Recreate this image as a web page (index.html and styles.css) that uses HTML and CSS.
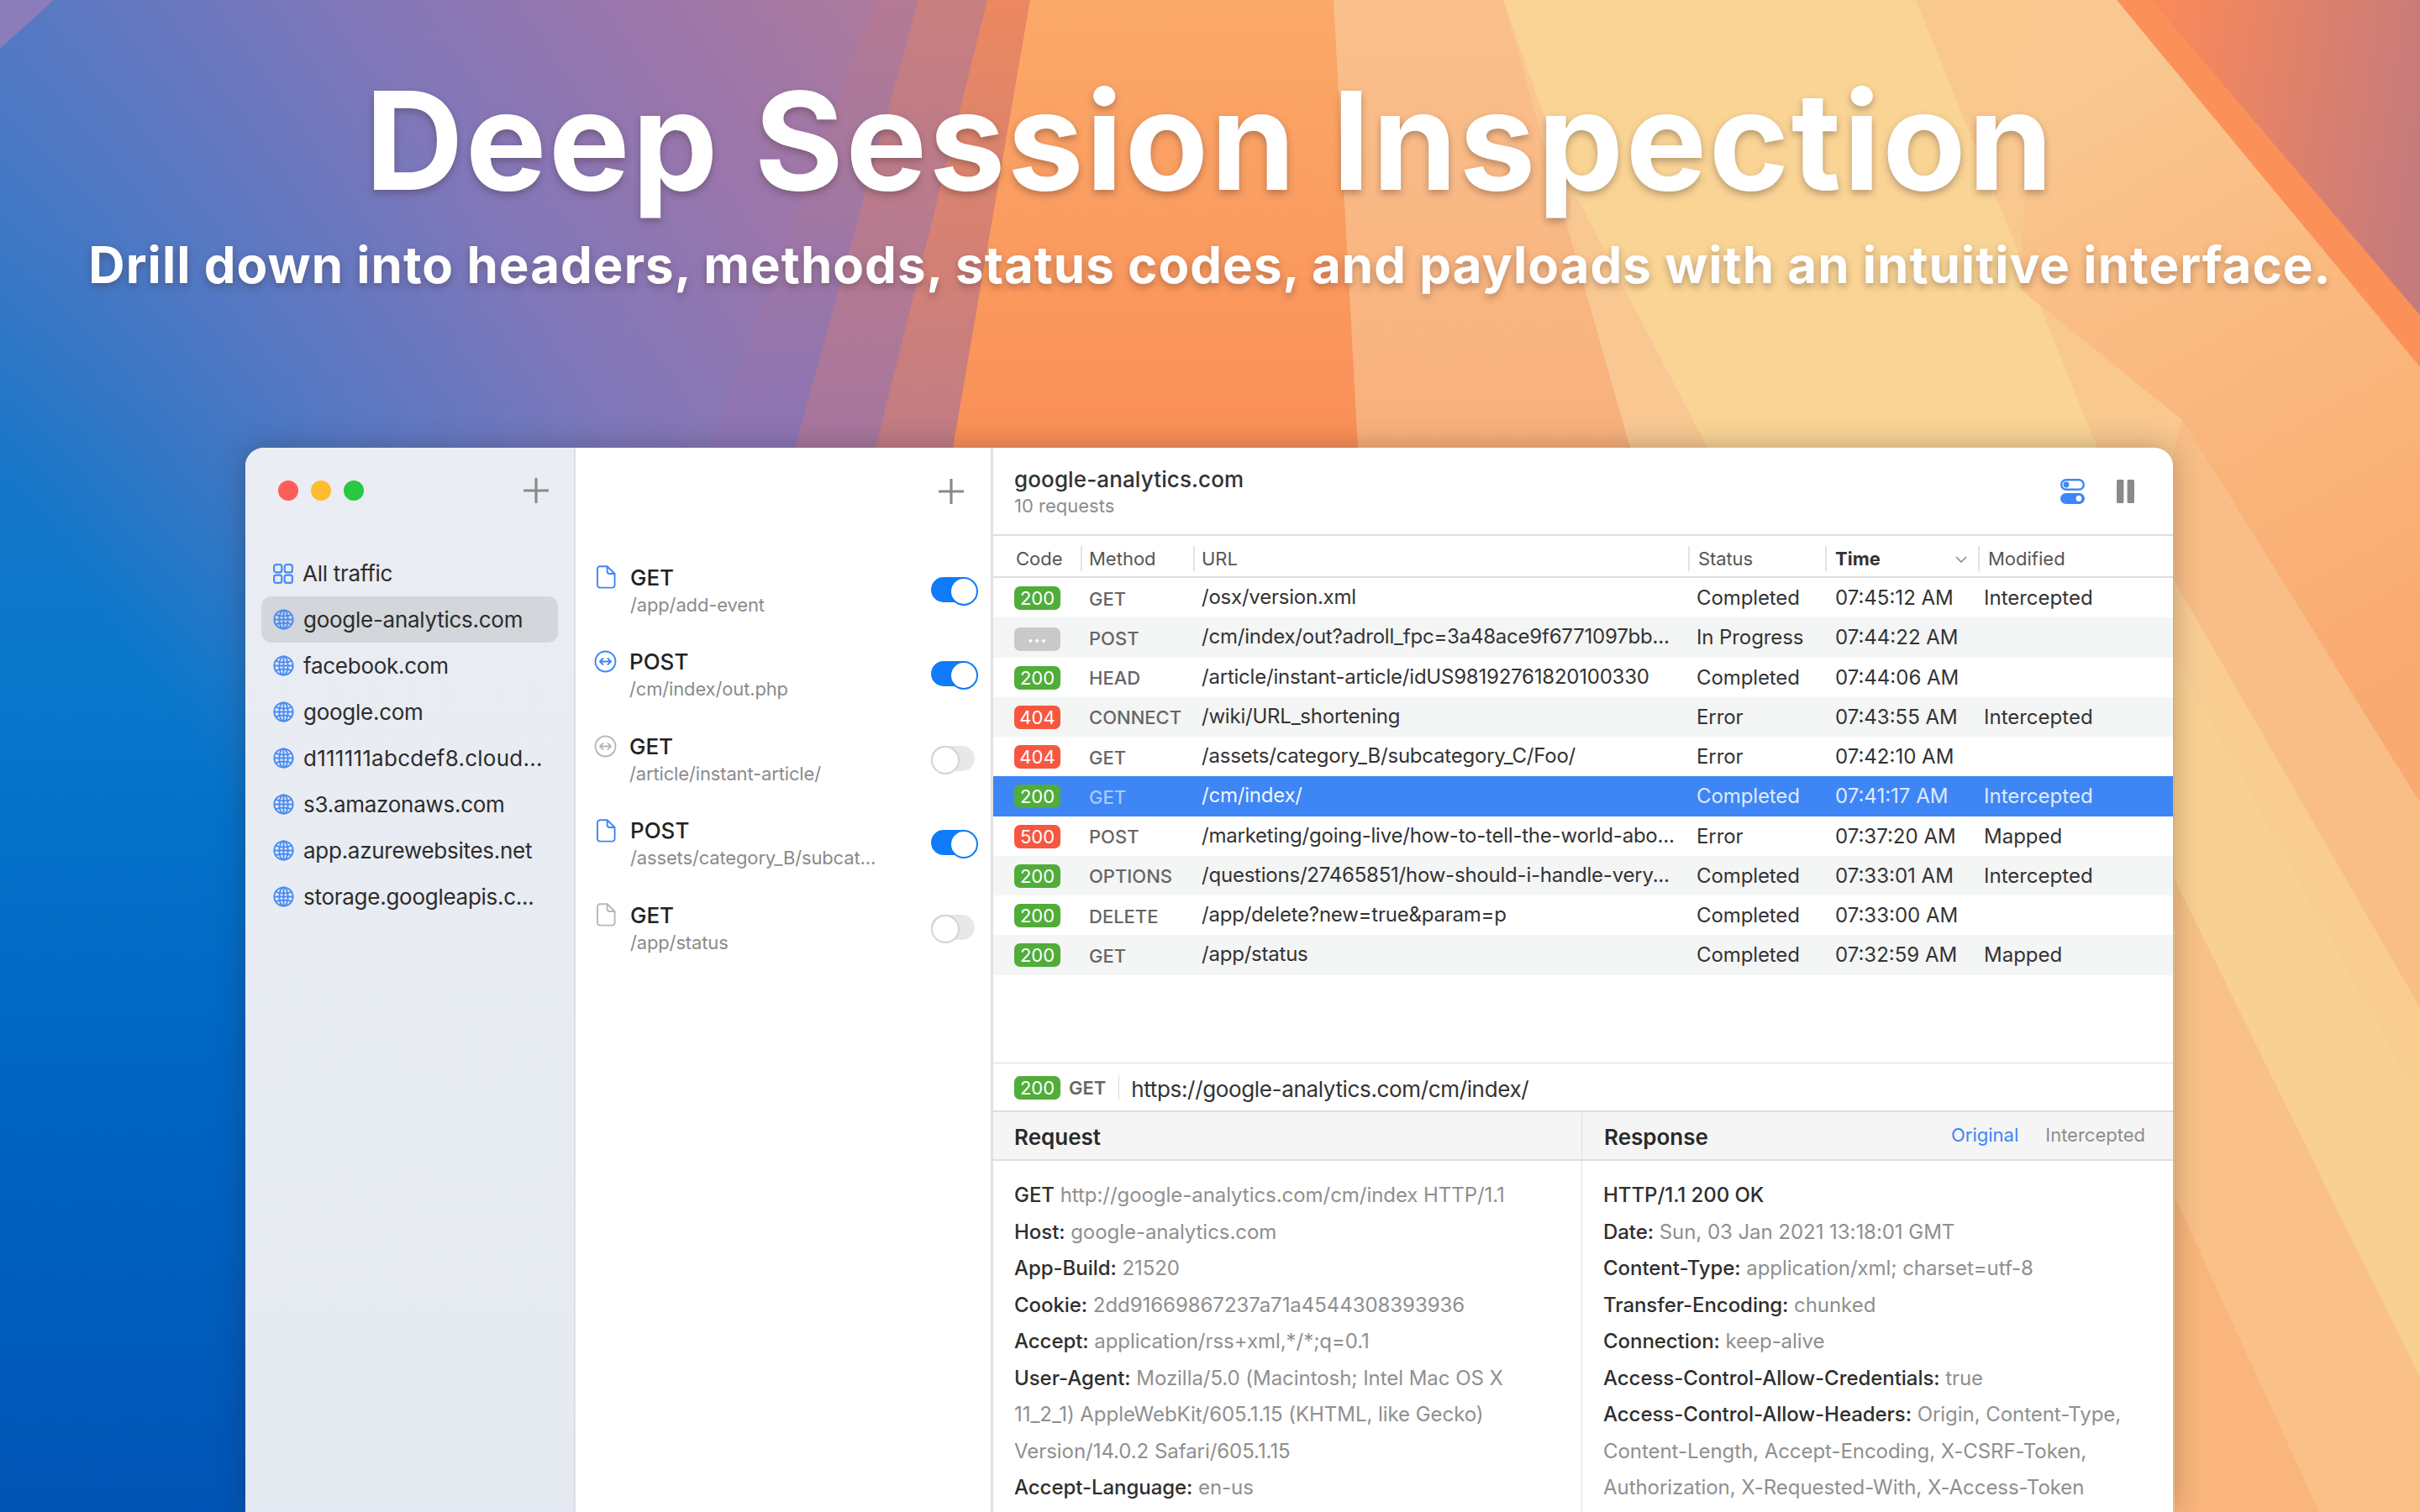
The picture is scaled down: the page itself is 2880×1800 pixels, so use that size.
FILE: index.html
```html
<!DOCTYPE html>
<html lang="en">
<head>
<meta charset="utf-8">
<title>Deep Session Inspection</title>
<link rel="stylesheet" href="styles.css">
</head>
<body>
<svg width="0" height="0" class="defs">
  <defs>
    <symbol id="i-globe" viewBox="0 0 26 26"><g fill="none" stroke="currentColor" stroke-width="2"><circle cx="13" cy="13" r="11.6"/><ellipse cx="13" cy="13" rx="5.4" ry="11.6"/><path d="M13 1.4v23.2M1.4 13h23.2M3.2 7.2c5.5 2.2 14 2.2 19.6 0M3.2 18.8c5.5-2.2 14-2.2 19.6 0"/></g></symbol>
    <symbol id="i-grid" viewBox="0 0 24 24"><g fill="none" stroke="currentColor" stroke-width="2.2"><rect x="1.1" y="1.1" width="9.2" height="9.2" rx="2.4"/><rect x="13.7" y="1.1" width="9.2" height="9.2" rx="2.4"/><rect x="1.1" y="13.7" width="9.2" height="9.2" rx="2.4"/><rect x="13.7" y="13.7" width="9.2" height="9.2" rx="2.4"/></g></symbol>
    <symbol id="i-doc" viewBox="0 0 24 28"><path d="M5 1.2h8.6L22.6 10v13.6a3 3 0 0 1-3 3H5a3 3 0 0 1-3-3V4.2a3 3 0 0 1 3-3ZM13.6 1.2V7a3 3 0 0 0 3 3h6" fill="none" stroke="currentColor" stroke-width="1.9" stroke-linejoin="round"/></symbol>
    <symbol id="i-swap" viewBox="0 0 28 28"><g fill="none" stroke="currentColor" stroke-linecap="round" stroke-linejoin="round"><circle cx="14" cy="14" r="12.4" stroke-width="2"/><path d="M7.4 14h13.2M11 10.2 7.2 14l3.8 3.8M17 10.2l3.8 3.8-3.8 3.8" stroke-width="1.9"/></g></symbol>
    <symbol id="i-plus" viewBox="0 0 30 30"><path d="M15 1v28M1 15h28" stroke="currentColor" stroke-width="3.2" stroke-linecap="round"/></symbol>
  </defs>
</svg>
<main class="stage">
  <svg class="wallpaper" viewBox="0 0 2880 1800" preserveAspectRatio="none">
    <defs>
      <linearGradient id="g-blue" x1="0" y1="0" x2="0" y2="1800" gradientUnits="userSpaceOnUse">
        <stop offset="0" stop-color="#3b7bc8"/><stop offset=".28" stop-color="#1a76c8"/><stop offset=".45" stop-color="#0878cc"/><stop offset=".67" stop-color="#0068c5"/><stop offset="1" stop-color="#0054b5"/>
      </linearGradient>
      <linearGradient id="g-violet" x1="100" y1="700" x2="1050" y2="60" gradientUnits="userSpaceOnUse">
        <stop offset="0" stop-color="#5a78c0" stop-opacity="0"/><stop offset=".3" stop-color="#5f78c2" stop-opacity=".85"/><stop offset=".55" stop-color="#7f77ba"/><stop offset=".8" stop-color="#9a76ac"/><stop offset="1" stop-color="#ab7a9f"/>
      </linearGradient>
      <linearGradient id="g-p1" x1="0" y1="0" x2="0" y2="533" gradientUnits="userSpaceOnUse"><stop offset="0" stop-color="#b57a93"/><stop offset="1" stop-color="#8b74b5"/></linearGradient>
      <linearGradient id="g-p2" x1="0" y1="0" x2="0" y2="533" gradientUnits="userSpaceOnUse"><stop offset="0" stop-color="#c97f7e"/><stop offset="1" stop-color="#a6769f"/></linearGradient>
      <linearGradient id="g-p3" x1="0" y1="0" x2="0" y2="533" gradientUnits="userSpaceOnUse"><stop offset="0" stop-color="#ec8860"/><stop offset="1" stop-color="#c07c85"/></linearGradient>
      <linearGradient id="g-p5" x1="0" y1="0" x2="0" y2="533" gradientUnits="userSpaceOnUse"><stop offset="0" stop-color="#fba969"/><stop offset="1" stop-color="#fa8f58"/></linearGradient>
      <linearGradient id="g-p6" x1="0" y1="0" x2="0" y2="533" gradientUnits="userSpaceOnUse"><stop offset="0" stop-color="#fac08c"/><stop offset="1" stop-color="#f8b07b"/></linearGradient>
      <linearGradient id="g-r0" x1="2450" y1="100" x2="2850" y2="800" gradientUnits="userSpaceOnUse"><stop offset="0" stop-color="#f9c891"/><stop offset=".45" stop-color="#fab97f"/><stop offset="1" stop-color="#f9aa70"/></linearGradient>
      <linearGradient id="g-dusk" x1="2560" y1="150" x2="2880" y2="200" gradientUnits="userSpaceOnUse"><stop offset="0" stop-color="#f9895a"/><stop offset="1" stop-color="#c57a7c"/></linearGradient>
    </defs>
    <rect width="2880" height="1800" fill="url(#g-blue)"/>
    <rect width="2880" height="1800" fill="url(#g-violet)"/>
    <polygon points="0,0 64,0 0,58" fill="#8a7dba"/>
    <polygon points="1042,0 2880,0 2880,1800 700,1800 845,533" fill="url(#g-p1)"/>
    <polygon points="1093,0 2880,0 2880,1800 800,1800 946,533" fill="url(#g-p2)"/>
    <polygon points="1175,0 2880,0 2880,1800 900,1800 1042,533" fill="url(#g-p3)"/>
    <polygon points="1226,0 2880,0 2880,1800 1000,1800 1134,533" fill="url(#g-p5)"/>
    <polygon points="1587,0 2880,0 2880,1800 1700,1800 1616,533" fill="url(#g-p6)"/>
    <polygon points="1789,0 2880,0 2880,1800 2000,1800 1940,533" fill="#f9c892"/>
    <polygon points="1789,0 2280,0 2880,1400 2880,1800 2200,1800 2032,533 1862,207" fill="#f9d495"/>
    <polygon points="2280,0 2880,0 2880,1800 2700,1800 2496,533" fill="#f9c88f"/>
    <polygon points="2519,0 2880,437 2880,956 2597,500 2404,344 2420,0" fill="url(#g-r0)"/>
    <polygon points="2597,500 2880,956 2880,1200 2588,692 2586,540" fill="#f9be87"/>
    <polygon points="2588,692 2880,1200 2880,1312 2588,780" fill="#f9cd92"/>
    <polygon points="2588,780 2880,1312 2880,1640 2588,1047" fill="#f9d093"/>
    <polygon points="2588,1047 2880,1640 2880,1800 2760,1800 2588,1424" fill="#f9c088"/>
    <polygon points="2588,1424 2760,1800 2588,1800" fill="#fab57c"/>
    <polygon points="2519,0 2880,0 2880,437" fill="#fb9159"/>
    <polygon points="2560,0 2880,0 2880,375" fill="url(#g-dusk)"/>
  </svg>

  <header class="hero">
    <h1 class="hero-title">Deep Session Inspection</h1>
    <p class="hero-sub">Drill down into headers, methods, status codes, and payloads with an intuitive interface.</p>
  </header>

  <section class="window">
    <aside class="sidebar">
      <div class="side-head">
        <span class="light red"></span><span class="light amber"></span><span class="light green"></span>
        <svg class="plus plus-side"><use href="#i-plus"/></svg>
      </div>
      <nav class="side-list">
        <a class="side-item"><svg class="side-icon grid-icon"><use href="#i-grid"/></svg>All traffic</a>
        <a class="side-item is-active"><svg class="side-icon"><use href="#i-globe"/></svg>google-analytics.com</a>
        <a class="side-item"><svg class="side-icon"><use href="#i-globe"/></svg>facebook.com</a>
        <a class="side-item"><svg class="side-icon"><use href="#i-globe"/></svg>google.com</a>
        <a class="side-item wide-digits"><svg class="side-icon"><use href="#i-globe"/></svg>d111111abcdef8.cloud...</a>
        <a class="side-item"><svg class="side-icon"><use href="#i-globe"/></svg>s3.amazonaws.com</a>
        <a class="side-item"><svg class="side-icon"><use href="#i-globe"/></svg>app.azurewebsites.net</a>
        <a class="side-item"><svg class="side-icon"><use href="#i-globe"/></svg>storage.googleapis.c...</a>
      </nav>
    </aside>

    <section class="rules">
      <div class="rules-head"><svg class="plus"><use href="#i-plus"/></svg></div>
      <div class="rule">
        <svg class="rule-icon doc on"><use href="#i-doc"/></svg>
        <div class="rule-text"><div class="rule-method">GET</div><div class="rule-path">/app/add-event</div></div>
        <span class="toggle on"></span>
      </div>
      <div class="rule">
        <svg class="rule-icon swap on"><use href="#i-swap"/></svg>
        <div class="rule-text"><div class="rule-method">POST</div><div class="rule-path">/cm/index/out.php</div></div>
        <span class="toggle on"></span>
      </div>
      <div class="rule">
        <svg class="rule-icon swap off"><use href="#i-swap"/></svg>
        <div class="rule-text"><div class="rule-method">GET</div><div class="rule-path">/article/instant-article/</div></div>
        <span class="toggle"></span>
      </div>
      <div class="rule">
        <svg class="rule-icon doc on"><use href="#i-doc"/></svg>
        <div class="rule-text"><div class="rule-method">POST</div><div class="rule-path">/assets/category_B/subcat...</div></div>
        <span class="toggle on"></span>
      </div>
      <div class="rule">
        <svg class="rule-icon doc off"><use href="#i-doc"/></svg>
        <div class="rule-text"><div class="rule-method">GET</div><div class="rule-path">/app/status</div></div>
        <span class="toggle"></span>
      </div>
    </section>

    <section class="detail">
      <div class="detail-head">
        <div class="detail-title">
          <div class="host">google-analytics.com</div>
          <div class="count">10 requests</div>
        </div>
        <div class="detail-tools">
          <svg class="tool-switch" viewBox="0 0 29 30"><rect x="1.2" y="1.2" width="26.6" height="11.6" rx="5.8" fill="none" stroke="#3f86f5" stroke-width="2.4"/><circle cx="7" cy="7" r="3.4" fill="#3f86f5"/><rect y="17" width="29" height="13" rx="6.5" fill="#3f86f5"/><circle cx="22" cy="23.5" r="3.4" fill="#fff"/></svg>
          <svg class="tool-pause" viewBox="0 0 21 28"><rect width="8.4" height="28" rx="1.6" fill="#8a8a8a"/><rect x="12.6" width="8.4" height="28" rx="1.6" fill="#8a8a8a"/></svg>
        </div>
      </div>

      <div class="tr thead">
        <div class="th c-code">Code</div>
        <div class="th c-div">Method</div>
        <div class="th c-div">URL</div>
        <div class="th c-div c-status">Status</div>
        <div class="th c-div c-time sorted">Time<svg class="chev" viewBox="0 0 14 9"><path d="M1 1l6 6 6-6" fill="none" stroke="#8d8d8d" stroke-width="1.6"/></svg></div>
        <div class="th c-div c-mod">Modified</div>
      </div>

      <div class="rows">
        <div class="tr row"><div class="c-code"><span class="badge ok">200</span></div><div class="method">GET</div><div class="url">/osx/version.xml</div><div class="c-status">Completed</div><div class="c-time">07:45:12 AM</div><div class="c-val">Intercepted</div></div>
        <div class="tr row alt"><div class="c-code"><span class="badge wait">•••</span></div><div class="method">POST</div><div class="url">/cm/index/out?adroll_fpc=3a48ace9f6771097bb...</div><div class="c-status">In Progress</div><div class="c-time">07:44:22 AM</div><div class="c-val"></div></div>
        <div class="tr row"><div class="c-code"><span class="badge ok">200</span></div><div class="method">HEAD</div><div class="url">/article/instant-article/idUS98192761820100330</div><div class="c-status">Completed</div><div class="c-time">07:44:06 AM</div><div class="c-val"></div></div>
        <div class="tr row alt"><div class="c-code"><span class="badge err">404</span></div><div class="method">CONNECT</div><div class="url">/wiki/URL_shortening</div><div class="c-status">Error</div><div class="c-time">07:43:55 AM</div><div class="c-val">Intercepted</div></div>
        <div class="tr row"><div class="c-code"><span class="badge err">404</span></div><div class="method">GET</div><div class="url">/assets/category_B/subcategory_C/Foo/</div><div class="c-status">Error</div><div class="c-time">07:42:10 AM</div><div class="c-val"></div></div>
        <div class="tr row selected"><div class="c-code"><span class="badge ok">200</span></div><div class="method">GET</div><div class="url">/cm/index/</div><div class="c-status">Completed</div><div class="c-time">07:41:17 AM</div><div class="c-val">Intercepted</div></div>
        <div class="tr row"><div class="c-code"><span class="badge err">500</span></div><div class="method">POST</div><div class="url">/marketing/going-live/how-to-tell-the-world-abo...</div><div class="c-status">Error</div><div class="c-time">07:37:20 AM</div><div class="c-val">Mapped</div></div>
        <div class="tr row alt"><div class="c-code"><span class="badge ok">200</span></div><div class="method">OPTIONS</div><div class="url">/questions/27465851/how-should-i-handle-very...</div><div class="c-status">Completed</div><div class="c-time">07:33:01 AM</div><div class="c-val">Intercepted</div></div>
        <div class="tr row"><div class="c-code"><span class="badge ok">200</span></div><div class="method">DELETE</div><div class="url">/app/delete?new=true&amp;param=p</div><div class="c-status">Completed</div><div class="c-time">07:33:00 AM</div><div class="c-val"></div></div>
        <div class="tr row alt"><div class="c-code"><span class="badge ok">200</span></div><div class="method">GET</div><div class="url">/app/status</div><div class="c-status">Completed</div><div class="c-time">07:32:59 AM</div><div class="c-val">Mapped</div></div>
      </div>

      <div class="inspector">
        <div class="urlbar">
          <span class="badge ok">200</span><span class="urlbar-method">GET</span><span class="urlbar-url">https://google-analytics.com/cm/index/</span>
        </div>
        <div class="panes">
          <div class="pane pane-req">
            <div class="pane-head"><h2 class="pane-title">Request</h2></div>
            <div class="pane-body">
              <div><b>GET</b> http://google-analytics.com/cm/index HTTP/1.1</div>
              <div><b>Host:</b> google-analytics.com</div>
              <div><b>App-Build:</b> 21520</div>
              <div><b>Cookie:</b> 2dd91669867237a71a4544308393936</div>
              <div><b>Accept:</b> application/rss+xml,*/*;q=0.1</div>
              <div><b>User-Agent:</b> Mozilla/5.0 (Macintosh; Intel Mac OS X<br>11_2_1) AppleWebKit/605.1.15 (KHTML, like Gecko)<br>Version/14.0.2 Safari/605.1.15</div>
              <div><b>Accept-Language:</b> en-us</div>
            </div>
          </div>
          <div class="pane">
            <div class="pane-head"><h2 class="pane-title">Response</h2><div class="pane-tabs"><span class="tab-on">Original</span><span>Intercepted</span></div></div>
            <div class="pane-body">
              <div><b>HTTP/1.1 200 OK</b></div>
              <div><b>Date:</b> Sun, 03 Jan 2021 13:18:01 GMT</div>
              <div><b>Content-Type:</b> application/xml; charset=utf-8</div>
              <div><b>Transfer-Encoding:</b> chunked</div>
              <div><b>Connection:</b> keep-alive</div>
              <div><b>Access-Control-Allow-Credentials:</b> true</div>
              <div><b>Access-Control-Allow-Headers:</b> Origin, Content-Type,<br>Content-Length, Accept-Encoding, X-CSRF-Token,<br>Authorization, X-Requested-With, X-Access-Token</div>
            </div>
          </div>
        </div>
      </div>
    </section>
  </section>
</main>
</body>
</html>
```
FILE: styles.css
```css
* { box-sizing: border-box; }
html, body { margin: 0; padding: 0; }
body { width: 2880px; height: 1800px; overflow: hidden; font-family: Inter, "Liberation Sans", sans-serif; color: #2b2b2b; }
.defs { position: absolute; }
.stage { position: relative; width: 2880px; height: 1800px; overflow: hidden; display: flex; flex-direction: column; }
.wallpaper { position: absolute; inset: 0; width: 2880px; height: 1800px; }

.hero { position: relative; height: 533px; padding-top: 70px; text-align: center; color: #fff; }
.hero-title { margin: 0; font-size: 162px; line-height: 194px; font-weight: 700; letter-spacing: 2.6px; text-shadow: 0 4px 8px rgba(60, 40, 40, .35); }
.hero-sub { margin: 15px 0 0; font-size: 60px; line-height: 72px; font-weight: 700; letter-spacing: 1.03px; text-shadow: 0 4px 8px rgba(60, 40, 40, .35); }

.window { position: relative; flex: 1; min-height: 0; margin-left: 292px; width: 2294px; display: flex; background: #fff; border-radius: 22px 22px 0 0; box-shadow: 0 0 34px rgba(40, 30, 30, .3); overflow: hidden; }

.sidebar { flex: 0 0 393px; min-width: 0; background: linear-gradient(180deg, #eaedf3, #e5eaf2); border-right: 2px solid #dcdfe6; }
.side-head { height: 102px; margin-bottom: 20px; padding: 0 30px 0 39px; display: flex; align-items: center; gap: 15px; }
.light { width: 24px; height: 24px; border-radius: 50%; }
.light.red { background: #ff5f57; }
.light.amber { background: #febc2e; }
.light.green { background: #28c840; }
.plus { width: 30px; height: 30px; color: #8a8a8a; display: block; }
.plus-side { margin-left: auto; }
.side-list { padding: 0 19px; display: flex; flex-direction: column; }
.side-item { height: 55px; padding-left: 14px; display: flex; align-items: center; gap: 11px; font-size: 26px; letter-spacing: -.27px; color: #2c2c2c; border-radius: 12px; white-space: nowrap; }
.side-item.is-active { background: #d3d6db; }
.side-item.wide-digits { letter-spacing: .25px; }
.side-icon { width: 25px; height: 25px; color: #4a8cf2; flex: none; }
.grid-icon { width: 24px; height: 24px; }

.rules { flex: 0 0 497px; min-width: 0; border-right: 3px solid #e1e1e3; }
.rules-head { height: 120px; padding: 37px 32px 0 0; display: flex; justify-content: flex-end; align-items: flex-start; }
.rule { height: 100.5px; display: flex; align-items: center; padding: 0 19px 0 23px; }
.rule-icon { flex: none; width: 26px; height: 28px; margin-right: 16px; margin-top: -32px; }
.rule-icon.swap { width: 27px; height: 27px; margin-right: 15px; margin-left: -1px; }
.rule-icon.on { color: #3f86f5; }
.rule-icon.off { color: #b8b8b8; }
.rule-text { flex: 1; min-width: 0; padding-top: 1px; }
.rule-method { font-size: 26px; line-height: 33px; font-weight: 500; color: #222; }
.rule-path { font-size: 22px; line-height: 33px; letter-spacing: -.15px; color: #8b8b8b; white-space: nowrap; }
.toggle { position: relative; flex: none; width: 52px; height: 30px; margin-bottom: 3px; border-radius: 15px; background: linear-gradient(90deg, #e4e4e4, #e9e9e9); }
.toggle::after { content: ""; position: absolute; left: 0; top: 0; width: 30px; height: 30px; border-radius: 50%; background: #fff; border: 2px solid #d4d4d4; }
.toggle.on { background: #0f7bf8; }
.toggle.on::after { left: 22px; border-color: #0f7bf8; }

.detail { flex: 1; min-width: 0; display: flex; flex-direction: column; }
.detail-head { flex: 0 0 105px; display: flex; align-items: center; justify-content: space-between; padding: 0 46px 0 25px; border-bottom: 2px solid #dedede; }
.host { font-size: 26px; line-height: 34px; font-weight: 500; letter-spacing: .12px; color: #333; }
.count { font-size: 22px; line-height: 28px; color: #8d8d8d; }
.detail-tools { display: flex; align-items: center; gap: 38px; }
.tool-switch { width: 29px; height: 30px; display: block; }
.tool-pause { width: 21px; height: 28px; display: block; }

.tr { display: grid; grid-template-columns: 104px 134px 589px 163px 182px 1fr; align-items: center; }
.thead { flex: 0 0 50px; padding-top: 6px; border-bottom: 2px solid #dedede; }
.th { font-size: 22px; color: #565656; height: 30px; line-height: 30px; white-space: nowrap; }
.th.c-code { padding-left: 27px; }
.c-div { border-left: 2px solid #e4e4e4; padding-left: 8px; }
.th.c-status { padding-left: 10px; }
.th.c-time { padding: 0 13px 0 10px; display: flex; align-items: center; justify-content: space-between; }
.th.c-mod { padding-left: 10px; }
.sorted { font-weight: 700; color: #333; }
.chev { width: 14px; height: 9px; margin-top: 3px; }

.rows { flex: 1; min-height: 0; }
.row { height: 47.25px; font-size: 24px; color: #333; white-space: nowrap; }
.row.alt { background: #f4f5f5; }
.row > .c-code { padding-left: 25px; }
.method { padding-left: 10px; font-size: 22px; font-weight: 500; color: #666; padding-top: 2px; }
.url { padding-left: 10px; padding-bottom: 2px; letter-spacing: -.22px; color: #333; }
.c-status { padding-left: 10px; letter-spacing: -.1px; }
.c-time { padding-left: 12px; }
.c-val { padding-left: 7px; }
.row.selected { background: #3e86f6; color: #dfeafd; }
.row.selected .method { color: #a8c9fa; }
.row.selected .url { color: #eef4fe; }

.badge { display: inline-flex; align-items: center; justify-content: center; width: 55px; height: 28px; border-radius: 7px; font-size: 22px; color: #fff; }
.badge.ok { background: #50ad3a; }
.badge.err { background: #f7573f; }
.badge.wait { background: #c9c9c9; font-size: 12px; letter-spacing: 1px; }

.inspector { flex: 0 0 535px; border-top: 1px solid #dcdcdc; display: flex; flex-direction: column; }
.urlbar { flex: 0 0 58px; display: flex; align-items: center; padding: 2px 0 0 25px; border-bottom: 2px solid #dedede; }
.urlbar-method { margin-left: 10px; padding-right: 15px; line-height: 30px; font-size: 22px; font-weight: 600; color: #666; border-right: 1px solid #dcdcdc; }
.urlbar-url { margin-left: 14px; font-size: 26px; letter-spacing: -.35px; color: #333; padding-top: 3px; }
.panes { flex: 1; min-height: 0; display: flex; }
.pane { flex: 1; min-width: 0; }
.pane-req { flex: 0 0 701px; border-right: 1px solid #dedede; }
.pane-head { height: 58px; padding: 2px 33px 0 26px; display: flex; align-items: center; justify-content: space-between; background: #f5f5f5; border-bottom: 2px solid #dedede; }
.pane-req .pane-head { padding-left: 25px; }
.pane-title { margin: 0; font-size: 26px; font-weight: 600; color: #2a2a2a; }
.pane-tabs { display: flex; gap: 32px; font-size: 22px; color: #8d8d8d; margin-top: -4px; }
.tab-on { color: #3f86f5; }
.pane-body { padding: 19px 0 0 25px; font-size: 24px; line-height: 43.5px; letter-spacing: -.05px; color: #8f8f8f; white-space: nowrap; }
.pane-body b { font-weight: 500; color: #2e2e2e; }
```
